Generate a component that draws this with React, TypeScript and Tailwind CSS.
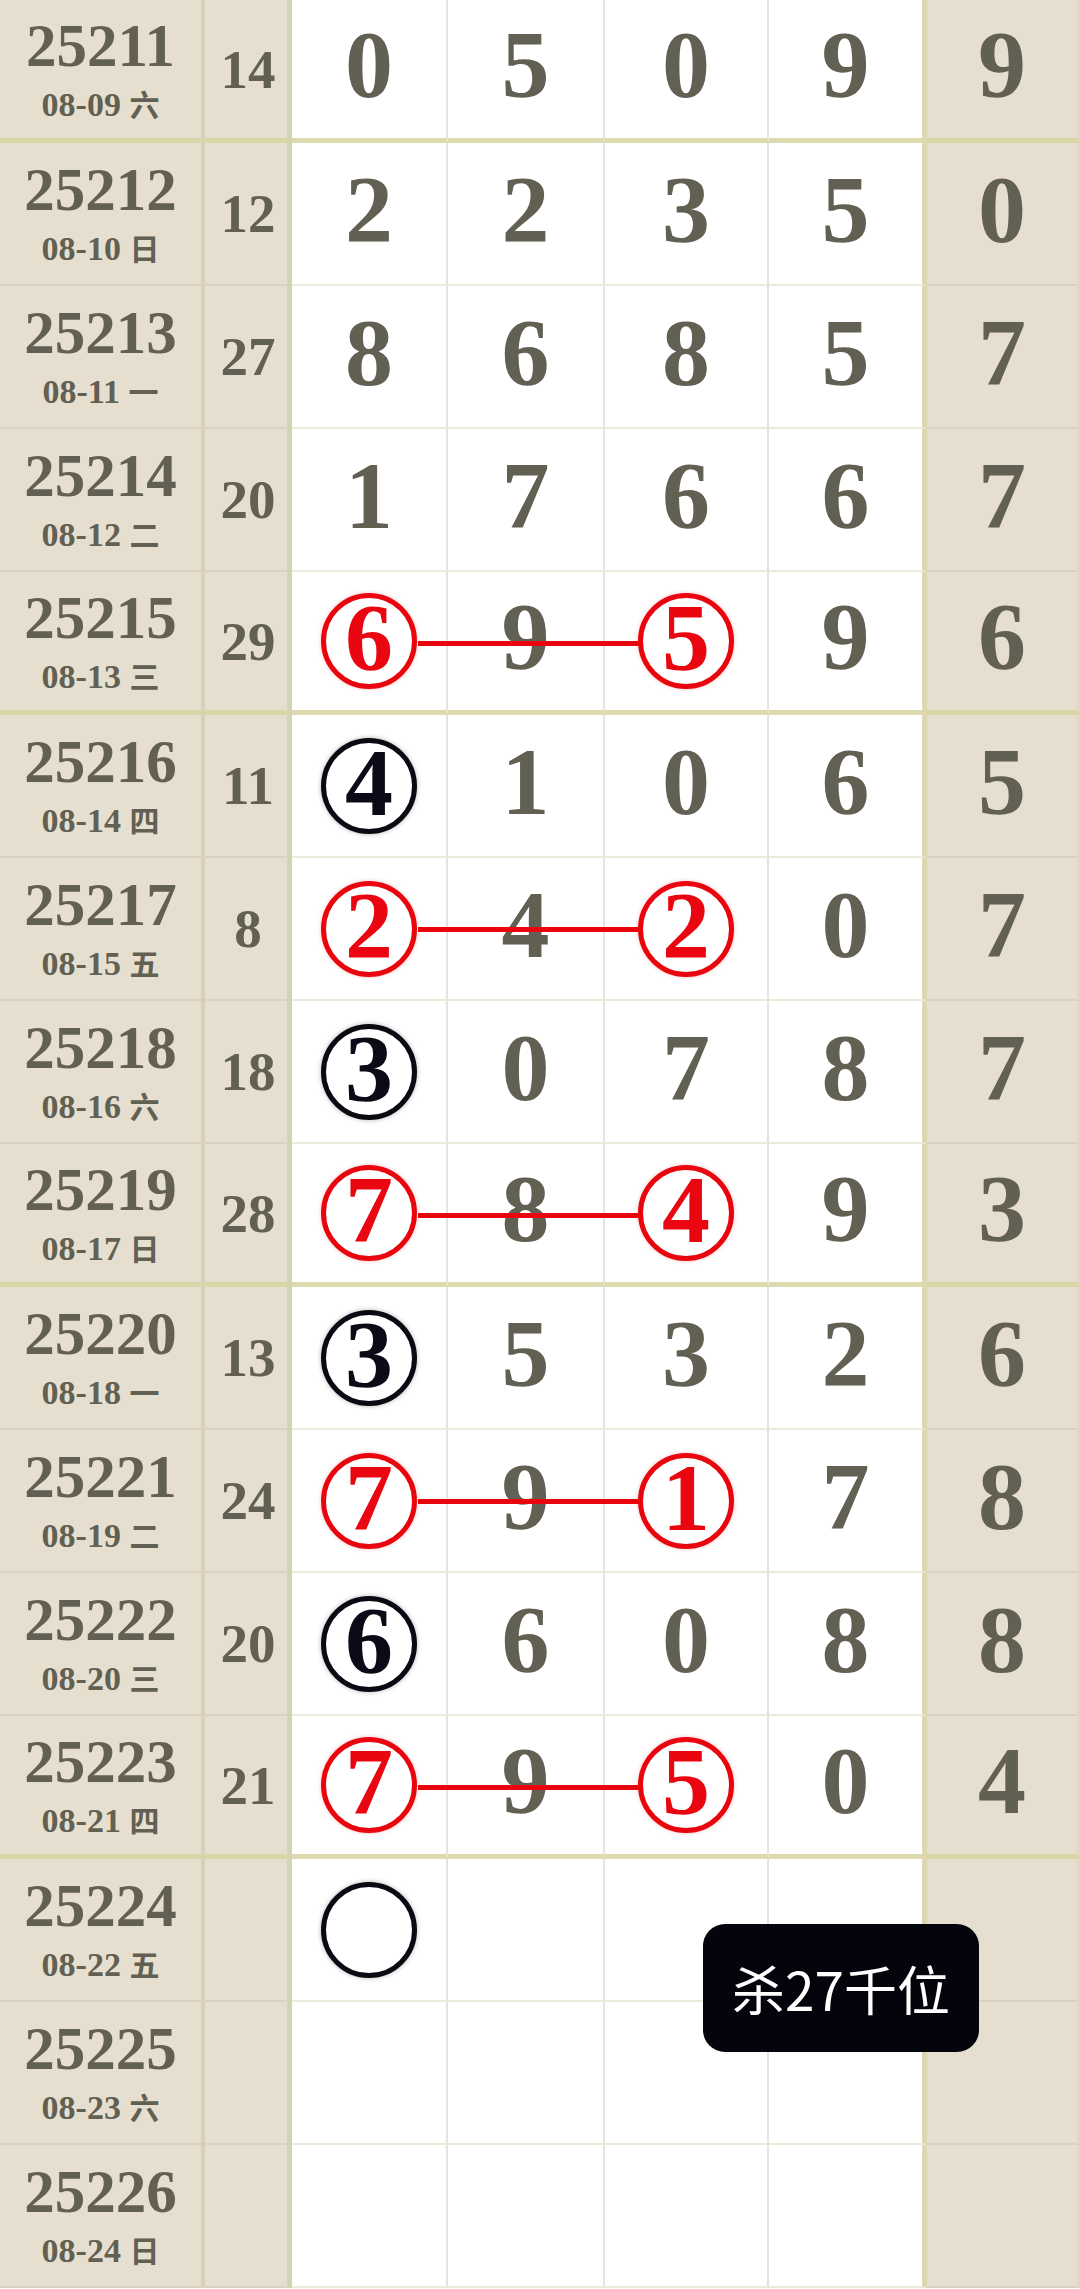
import React from "react";

type Mark = "r" | "b" | null;

interface Row {
  issue: string;
  date: string;
  week: string;
  sum: string;
  nums: string[];
  marks: Mark[];
  last: string;
  link?: boolean;
  thick?: boolean;
  emptyRing?: boolean;
}

const raw: [string, string, string, string, string, string][] = [
  ["25211", "08-09", "六", "14", "0509", "9"],
  ["25212", "08-10", "日", "12", "2235", "0"],
  ["25213", "08-11", "一", "27", "8685", "7"],
  ["25214", "08-12", "二", "20", "1766", "7"],
  ["25215", "08-13", "三", "29", "6959", "6"],
  ["25216", "08-14", "四", "11", "4106", "5"],
  ["25217", "08-15", "五", "8", "2420", "7"],
  ["25218", "08-16", "六", "18", "3078", "7"],
  ["25219", "08-17", "日", "28", "7849", "3"],
  ["25220", "08-18", "一", "13", "3532", "6"],
  ["25221", "08-19", "二", "24", "7917", "8"],
  ["25222", "08-20", "三", "20", "6608", "8"],
  ["25223", "08-21", "四", "21", "7950", "4"],
  ["25224", "08-22", "五", "", "", ""],
  ["25225", "08-23", "六", "", "", ""],
  ["25226", "08-24", "日", "", "", ""],
];

const rows: Row[] = raw.map(([issue, date, week, sum, nums, last], i) => {
  const red = i >= 4 && i <= 12 && i % 2 === 0;
  const black = i >= 5 && i <= 11 && i % 2 === 1;
  const marks: Mark[] = [null, null, null, null];
  if (red) {
    marks[0] = "r";
    marks[2] = "r";
  }
  if (black) marks[0] = "b";
  return {
    issue,
    date,
    week,
    sum,
    nums: nums ? nums.split("") : ["", "", "", ""],
    marks,
    last,
    link: red,
    thick: i === 0 || i === 4 || i === 8 || i === 12,
    emptyRing: i === 13,
  };
});

const serif = "font-['Liberation_Serif','Noto_Sans_CJK_SC',serif] font-bold";
const widths = ["w-[156px]", "w-[157px]", "w-[164px]", "w-[158px]"];

function Digit({ value, mark }: { value: string; mark: Mark }) {
  if (mark === "r") {
    return (
      <div className="w-[96px] h-[96px] rounded-full border-[5px] border-[#e8050d] bg-white flex items-center justify-center shadow-[0_0_4px_rgba(232,5,13,0.25)]">
        <span className={`${serif} text-[96px] leading-none text-[#ea0610] -mt-[6px]`}>{value}</span>
      </div>
    );
  }
  if (mark === "b") {
    return (
      <div className="w-[96px] h-[96px] rounded-full border-[5px] border-[#0a0a12] bg-white flex items-center justify-center shadow-[0_0_5px_rgba(0,0,0,0.3)]">
        <span className={`${serif} text-[96px] leading-none text-[#0b0b18] -mt-[6px]`}>{value}</span>
      </div>
    );
  }
  return <span className={`${serif} text-[96px] leading-none text-[#625f53] -mt-[8px]`}>{value}</span>;
}

export default function App() {
  return (
    <div className="relative w-[1080px] bg-white">
      {rows.map((r) => {
        const beigeB = r.thick ? "border-b-[5px] border-b-[#d9d6a7]" : "border-b-[2px] border-b-[#dad2be]";
        const whiteB = r.thick ? "border-b-[5px] border-b-[#dddaae]" : "border-b-[2px] border-b-[#eceadb]";
        return (
          <div key={r.issue} className="relative flex h-[143px]">
            {/* issue + date */}
            <div className={`w-[205px] bg-[#e6dfcf] border-r-[4px] border-r-[#d8cfbb] ${beigeB} flex flex-col items-center justify-center text-[#625f53]`}>
              <span className={`${serif} text-[61px] leading-none -mt-[2px]`}>{r.issue}</span>
              <span className={`${serif} text-[34px] leading-none mt-[12px]`}>
                {r.date} <span className="font-['Noto_Sans_CJK_SC',sans-serif] font-bold text-[30px]">{r.week}</span>
              </span>
            </div>
            {/* sum */}
            <div className={`w-[87px] bg-[#e6dfcf] border-r-[5px] border-r-[#d2d4b3] ${beigeB} flex items-center justify-center`}>
              <span className={`${serif} text-[55px] leading-none text-[#625f53] ml-[4px]`}>{r.sum}</span>
            </div>
            {/* four digits */}
            {r.nums.map((n, j) => (
              <div
                key={j}
                className={`${widths[j]} bg-white ${j === 3 ? "border-r-[5px] border-r-[#ddd7b4]" : "border-r-[2px] border-r-[#e7e5d9]"} ${whiteB} flex items-center justify-center`}
              >
                {j === 0 && r.emptyRing ? (
                  <div className="w-[96px] h-[96px] rounded-full border-[5px] border-[#0a0a12] bg-white shadow-[0_0_5px_rgba(0,0,0,0.3)]" />
                ) : (
                  <Digit value={n} mark={r.marks[j]} />
                )}
              </div>
            ))}
            {/* last */}
            <div className={`w-[153px] bg-[#e6dfcf] border-r-[3px] border-r-[#e2d6c8] ${beigeB} flex items-center justify-center`}>
              <span className={`${serif} text-[96px] leading-none text-[#625f53] -mt-[8px]`}>{r.last}</span>
            </div>
            {r.link && <div className="absolute left-[418px] top-[69px] w-[221px] h-[5px] bg-[#e8050d]" />}
          </div>
        );
      })}

      {/* tooltip */}
      <div className="absolute left-[703px] top-[1924px] w-[276px] h-[128px] rounded-[22px] bg-[#04040c] flex items-center justify-center">
        <span className="font-['Noto_Sans_CJK_SC',sans-serif] text-[53px] leading-none text-white">杀27千位</span>
      </div>
    </div>
  );
}
